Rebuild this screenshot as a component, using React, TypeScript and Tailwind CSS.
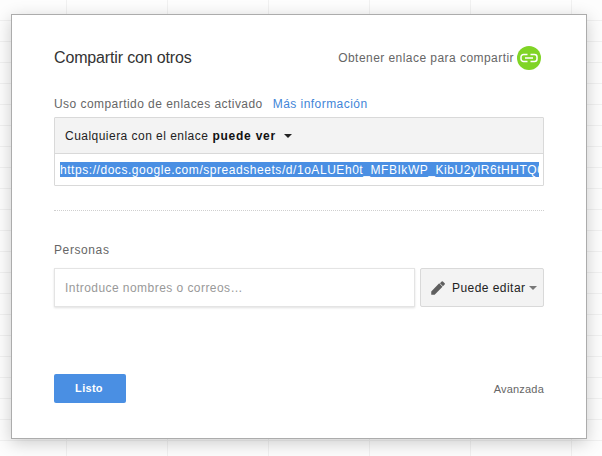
const font = "font-['Liberation_Sans',Arial,sans-serif]";

function LinkBadge() {
    return (
        <span className="flex h-6 w-6 items-center justify-center rounded-full bg-[#80d426]">
            <svg width="18" height="10" viewBox="0 0 18 10" fill="none">
                <path
                    d="M7.5 1.5H3.5a2.5 2.5 0 0 0-2.5 2.5v2a2.5 2.5 0 0 0 2.5 2.5h4M10.5 1.5h4a2.5 2.5 0 0 1 2.5 2.5v2a2.5 2.5 0 0 1-2.5 2.5h-4M5 5h8"
                    stroke="#fff"
                    strokeWidth="1.5"
                />
            </svg>
        </span>
    );
}

function PencilIcon() {
    return (
        <svg width="18" height="18" viewBox="0 0 24 24" fill="#5f5f5f">
            <path d="M3 16.5V21h4.5L18 10.2l-4.4-4.4L3 16.5zM20.9 7.3a1.1 1.1 0 0 0 0-1.6l-2.4-2.4a1.1 1.1 0 0 0-1.6 0l-2.3 2.3 4 4 2.3-2.3z" />
        </svg>
    );
}

export default function App() {
    return (
        <div className={`${font} h-[456px] w-[602px] overflow-hidden bg-[#fdfdfd] bg-[linear-gradient(to_right,#f1f1f1_1px,transparent_1px),linear-gradient(to_bottom,#f1f1f1_1px,transparent_1px)] bg-[length:101px_21px] bg-[position:66px_20px] pl-[11px] pt-[14px]`}>
            <div className="flex h-[425px] w-[576px] flex-col border border-[#acacac] bg-white pl-[42px] pr-[42px] pt-[31px] shadow-[0_4px_16px_rgba(0,0,0,0.2)]">
                <div className="flex h-6 items-center justify-between">
                    <h1 className="text-base leading-6 tracking-[-0.15px] text-[#333]">Compartir con otros</h1>
                    <div className="mr-[3px] flex items-center gap-[3px] text-xs tracking-[0.45px] text-[#666]">
                        <span>Obtener enlace para compartir</span>
                        <LinkBadge />
                    </div>
                </div>

                <div className="mt-[26px] flex h-4 items-center text-xs leading-4 tracking-[0.45px]">
                    <span className="text-[#666]">Uso compartido de enlaces activado</span>
                    <a className="ml-[10px] text-[#4285d8]">Más información</a>
                </div>

                <div className="mt-[5px] rounded-[1px] border border-[#d9d9d9]">
                    <div className="flex h-9 items-center border-b border-[#d9d9d9] bg-[#f3f3f3] pl-[10px] text-xs tracking-[0.47px] text-[#222]">
                        <span>Cualquiera con el enlace</span>
                        <b className="ml-[4px] tracking-[0.77px] text-[#111]">puede ver</b>
                        <span className="ml-[8px] h-0 w-0 border-x-4 border-t-4 border-x-transparent border-t-[#222]" />
                    </div>
                    <div className="flex h-[31px] items-center overflow-hidden pl-[5px] pr-[4px]">
                        <span className="flex h-[15px] w-full items-center overflow-hidden whitespace-nowrap bg-[#4a8fe3] text-xs tracking-[0.55px] text-white">
                            https://docs.google.com/spreadsheets/d/1oALUEh0t_MFBIkWP_KibU2ylR6tHHTQ0
                        </span>
                    </div>
                </div>

                <div className="mt-[24px] border-t border-dotted border-[#cfcfcf]" />

                <div className="mt-[31px] text-xs leading-4 tracking-[0.6px] text-[#666]">Personas</div>

                <div className="mt-[10px] flex gap-[5px]">
                    <div className="flex h-[39px] w-[361px] items-center border border-[#e4e4e4] pl-[10px] text-xs tracking-[0.45px] text-[#999] shadow-[0_1px_2px_rgba(0,0,0,0.12)]">
                        Introduce nombres o correos…
                    </div>
                    <div className="flex h-[39px] w-[124px] items-center rounded-[2px] border border-[#d9d9d9] bg-[#f3f3f3] pl-[8px] text-xs tracking-[0.45px] text-[#222]">
                        <PencilIcon />
                        <span className="ml-[5px]">Puede editar</span>
                        <span className="ml-[4px] h-0 w-0 border-x-4 border-t-4 border-x-transparent border-t-[#777]" />
                    </div>
                </div>

                <div className="mt-[67px] flex items-center justify-between">
                    <button className="h-[29px] w-[72px] rounded-[2px] bg-[#4a8fe3] pr-[2px] text-[11px] font-bold tracking-[0.3px] text-white">
                        Listo
                    </button>
                    <a className="mt-[1px] text-[11px] tracking-[0.2px] text-[#666]">Avanzada</a>
                </div>
            </div>
        </div>
    );
}
